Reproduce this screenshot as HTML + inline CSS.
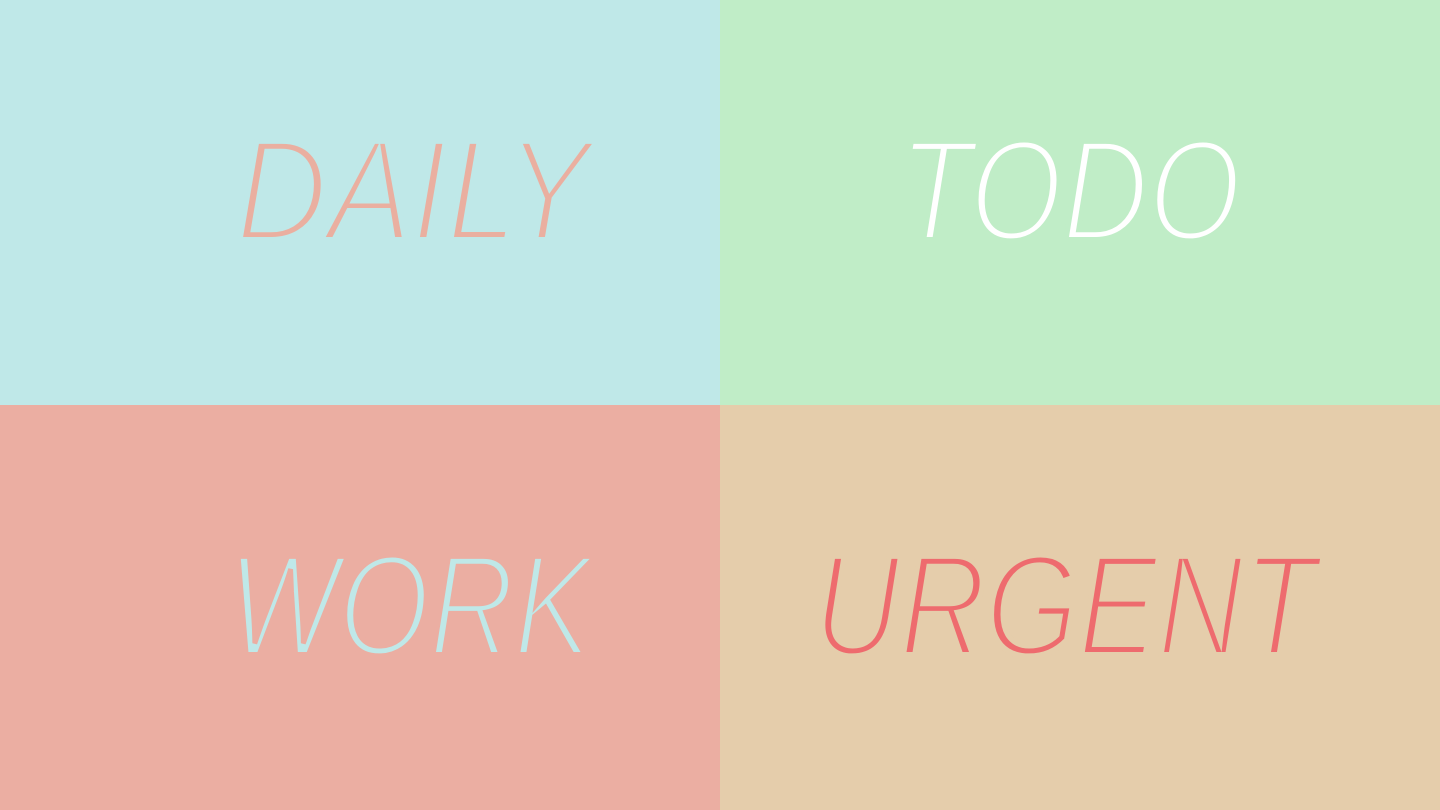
<!DOCTYPE html>
<html><head><meta charset="utf-8"><style>
html,body{margin:0;padding:0;width:1440px;height:810px;overflow:hidden}
svg{display:block}
text{font-family:"Liberation Sans",sans-serif;font-style:italic;font-size:144px;stroke-width:6;paint-order:fill stroke}
</style></head><body>
<svg width="1440" height="810" viewBox="0 0 1440 810" xmlns="http://www.w3.org/2000/svg">
<rect x="0" y="0" width="720" height="405" fill="#bfe8e8"/>
<rect x="720" y="0" width="720" height="405" fill="#c0edc7"/>
<rect x="0" y="405" width="720" height="405" fill="#ebaea2"/>
<rect x="720" y="405" width="720" height="405" fill="#e5cdab"/>
<text x="236" y="240" fill="#eaafa0" stroke="#bfe8e8" textLength="354" lengthAdjust="spacingAndGlyphs">DAILY</text>
<text x="899" y="240" fill="#ffffff" stroke="#c0edc7" textLength="342" lengthAdjust="spacingAndGlyphs">TODO</text>
<text x="228" y="655" fill="#bfe8e8" stroke="#ebaea2" textLength="364" lengthAdjust="spacingAndGlyphs">WORK</text>
<text x="814" y="655" fill="#ee6b6e" stroke="#e5cdab" textLength="502" lengthAdjust="spacingAndGlyphs">URGENT</text>
</svg>
</body></html>
